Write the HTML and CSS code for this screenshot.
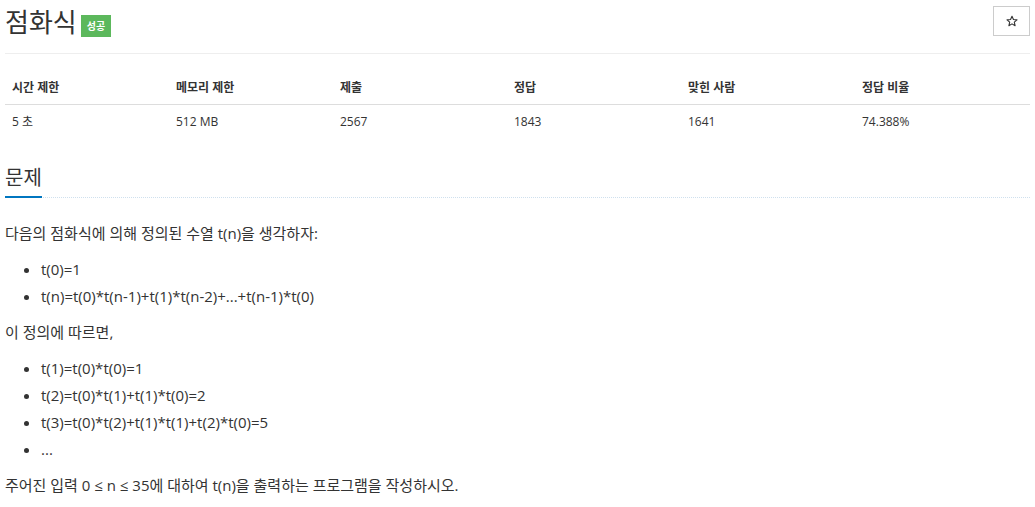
FILE: index.html
```html
<!DOCTYPE html>
<html lang="ko">
<head>
<meta charset="utf-8">
<link rel="stylesheet" href="styles.css">
</head>
<body>
<div class="page">
  <div class="title-row">
    <h1 class="title"><span>점화식</span><span class="badge">성공</span></h1>
    <button class="star" type="button" aria-label="즐겨찾기">
      <svg width="12" height="12" viewBox="0 0 24 24"><path d="M12 2.5l2.9 6.6 7.1.6-5.4 4.7 1.6 7-6.2-3.7-6.2 3.7 1.6-7L2 9.7l7.1-.6z" fill="none" stroke="#333" stroke-width="2.2" stroke-linejoin="round"/></svg>
    </button>
  </div>
  <div class="info">
    <div class="info-head">
      <div>시간 제한</div><div>메모리 제한</div><div>제출</div><div>정답</div><div>맞힌 사람</div><div>정답 비율</div>
    </div>
    <div class="info-row">
      <div>5 초</div><div>512 MB</div><div>2567</div><div>1843</div><div>1641</div><div>74.388%</div>
    </div>
  </div>
  <section class="problem">
    <div class="section-head"><h2>문제</h2></div>
    <div class="desc">
      <p>다음의 점화식에 의해 정의된 수열 t(n)을 생각하자:</p>
      <ul>
        <li>t(0)=1</li>
        <li>t(n)=t(0)*t(n-1)+t(1)*t(n-2)+...+t(n-1)*t(0)</li>
      </ul>
      <p>이 정의에 따르면,</p>
      <ul>
        <li>t(1)=t(0)*t(0)=1</li>
        <li>t(2)=t(0)*t(1)+t(1)*t(0)=2</li>
        <li>t(3)=t(0)*t(2)+t(1)*t(1)+t(2)*t(0)=5</li>
        <li>...</li>
      </ul>
      <p>주어진 입력 0 ≤ n ≤ 35에 대하여 t(n)을 출력하는 프로그램을 작성하시오.</p>
    </div>
  </section>
</div>
</body>
</html>
```

FILE: styles.css
```css
html, body {
  margin: 0;
  padding: 0;
  background: #fff;
}
body {
  font-family: "Open Sans", "Noto Sans CJK KR", sans-serif;
  font-size: 14px;
  line-height: 1.42857;
  color: #333;
}
.page {
  padding: 0 5px;
}
.title-row {
  display: flex;
  justify-content: space-between;
  align-items: flex-start;
  border-bottom: 1px solid #eee;
  padding-bottom: 16px;
}
.title {
  margin: 8px 0 0;
  font-size: 26px;
  font-weight: 400;
  line-height: 1.1;
  display: flex;
  align-items: center;
  gap: 4px;
}
.badge {
  display: inline-block;
  background: #5cb85c;
  color: #fff;
  font-size: 10px;
  font-weight: 700;
  padding: 0 6px;
  height: 22px;
  line-height: 22px;
  margin-top: 7px;
}
.star {
  margin-top: 6px;
  width: 37px;
  height: 30px;
  border: 1px solid #ccc;
  background: #fff;
  padding: 0;
  display: flex;
  align-items: center;
  justify-content: center;
}
.info {
  margin-top: 17px;
  font-size: 12px;
  line-height: 17px;
}
.info-head, .info-row {
  display: grid;
  grid-template-columns: 164px 164px 174px 174px 174px 1fr;
}
.info-head > div, .info-row > div {
  padding: 8px 7px;
}
.info-head {
  font-weight: 700;
  border-bottom: 1px solid #ddd;
}
.section-head {
  margin-top: 29px;
  border-bottom: 1px dotted #cfe0ee;
}
.section-head h2 {
  display: inline-block;
  margin: 0;
  font-size: 20px;
  font-weight: 400;
  line-height: 1.1;
  padding-bottom: 7px;
  border-bottom: 2px solid #0076c0;
  margin-bottom: -1px;
}
.desc {
  margin-top: 23px;
  font-size: 15px;
  line-height: 24px;
}
.desc p {
  margin: 0 0 12px;
}
.desc ul {
  margin: 0 0 12px;
  padding-left: 36px;
}
.desc li {
  margin-bottom: 3px;
}
```
